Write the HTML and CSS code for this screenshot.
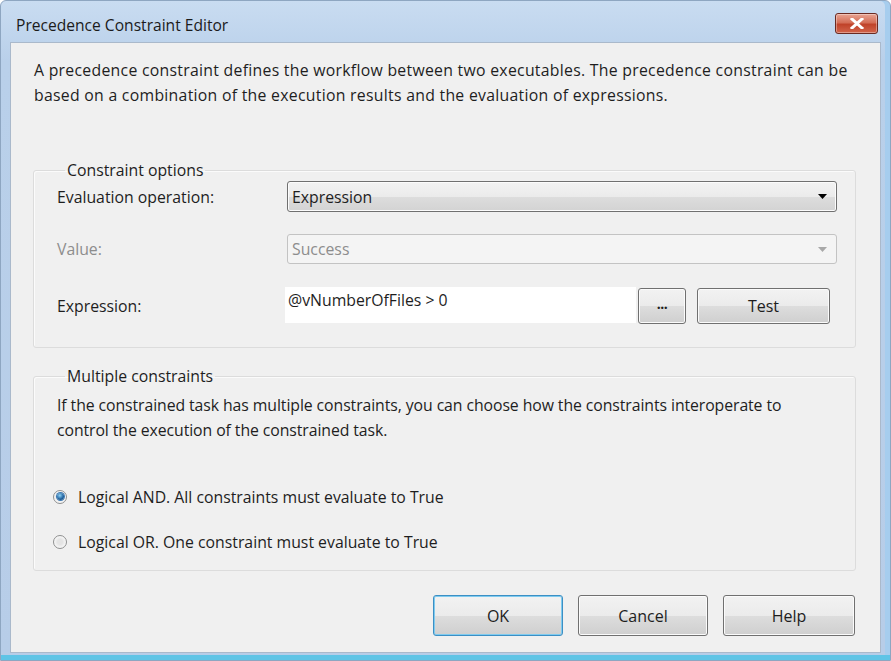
FILE: index.html
```html
<!DOCTYPE html>
<html>
<head>
<meta charset="utf-8">
<link rel="stylesheet" href="styles.css">
</head>
<body>
<div class="window">
  <div class="titlebar">
    <span class="title">Precedence Constraint Editor</span>
    <button class="close" aria-label="Close">
      <svg width="14" height="11" viewBox="0 0 14 11"><path d="M2 1 L12 10 M12 1 L2 10" stroke="#fff" stroke-width="3" stroke-linecap="square" fill="none"/></svg>
    </button>
  </div>
  <div class="client">
    <p class="desc">A precedence constraint defines the workflow between two executables. The precedence constraint can be<br>based on a combination of the execution results and the evaluation of expressions.</p>

    <fieldset class="group group-options">
      <legend>Constraint options</legend>
      <div class="form">
        <label class="lbl">Evaluation operation:</label>
        <div class="combo">
          <span>Expression</span>
          <svg class="arrow" width="9" height="5" viewBox="0 0 9 5"><path d="M0 0 H9 L4.5 5 Z" fill="#000"/></svg>
        </div>
        <label class="lbl disabled row2">Value:</label>
        <div class="combo combo-disabled row2">
          <span>Success</span>
          <svg class="arrow" width="9" height="5" viewBox="0 0 9 5"><path d="M0 0 H9 L4.5 5 Z" fill="#a8a8a8"/></svg>
        </div>
        <label class="lbl row3">Expression:</label>
        <div class="expr-row row3">
          <div class="textbox">@vNumberOfFiles &gt; 0</div>
          <button class="btn btn-dots">...</button>
          <button class="btn btn-test">Test</button>
        </div>
      </div>
    </fieldset>

    <fieldset class="group group-multi">
      <legend>Multiple constraints</legend>
      <p class="multi-text">If the constrained task has multiple constraints, you can choose how the constraints interoperate to<br>control the execution of the constrained task.</p>
      <div class="radios">
        <label class="radio-row"><span class="radio checked"></span>Logical AND. All constraints must evaluate to True</label>
        <label class="radio-row"><span class="radio"></span>Logical OR. One constraint must evaluate to True</label>
      </div>
    </fieldset>

    <div class="buttons">
      <button class="btn btn-big btn-default">OK</button>
      <button class="btn btn-big">Cancel</button>
      <button class="btn btn-big btn-help">Help</button>
    </div>
  </div>
</div>
</body>
</html>
```

FILE: styles.css
```css
* { box-sizing: border-box; }
html, body { margin: 0; padding: 0; }
body {
  width: 891px;
  height: 661px;
  overflow: hidden;
  font-family: "Open Sans", "Noto Sans", sans-serif;
  color: #1e1e1e;
}
.window {
  width: 891px;
  height: 661px;
  background: linear-gradient(#c9dcf1, #b9d0ea 60px, #b7cde8);
  border: 1px solid #8ea6c1;
  border-radius: 6px 6px 0 0;
  display: flex;
  flex-direction: column;
  padding: 0 9px 0 9px;
  box-shadow: inset 0 -5px 0 #5fc4e6, inset -5px 0 0 #a6cdee;
}
.titlebar {
  height: 41px;
  display: flex;
  align-items: flex-start;
  justify-content: space-between;
  flex-shrink: 0;
}
.title {
  font-size: 15.6px;
  margin: 13px 0 0 6px;
  color: #1b1b1b;
}
.close {
  margin: 12px 3px 0 0;
  width: 43px;
  height: 21px;
  border: 1px solid #6a2a22;
  border-radius: 3px;
  background: linear-gradient(#e8a493, #d46e57 45%, #c0432a 55%, #d2654c);
  box-shadow: inset 0 0 0 1px rgba(255,255,255,0.35);
  display: flex;
  align-items: center;
  justify-content: center;
  padding: 0;
}
.client {
  height: 611px;
  background: #f0f0f0;
  border: 1px solid #aab9cb;
  padding: 0 24px 0 22px;
  display: flex;
  flex-direction: column;
}
.desc {
  margin: 15px 0 0 1px;
  font-size: 15.8px;
  letter-spacing: 0.28px;
  line-height: 25px;
  white-space: nowrap;
}
.group {
  border: 1px solid #dcdcdc;
  border-radius: 3px;
  box-shadow: inset 1px 1px 0 #fbfbfb;
  margin: 0;
  padding: 0 18px 0 23px;
  min-width: 0;
}
.group legend {
  font-size: 15.8px;
  line-height: 20px;
  padding: 0 2px;
  margin-left: 8px;
}
.group-options {
  margin-top: 52px;
  height: 188px;
}
.form {
  display: grid;
  grid-template-columns: 230px 1fr;
  align-items: center;
  margin-top: 1px;
}
.row2 { margin-top: 22px; }
.row3 { margin-top: 23px; }
.lbl { font-size: 15.8px; }
.lbl.disabled { color: #8d8d8d; }
.combo {
  height: 31px;
  border: 1px solid #707070;
  border-radius: 3px;
  background: linear-gradient(#f3f3f3, #ebebeb 50%, #dddddd 51%, #d3d3d3);
  box-shadow: inset 0 0 0 1px #fcfcfc;
  display: flex;
  align-items: center;
  justify-content: space-between;
  padding: 0 9px 0 4px;
  font-size: 15.8px;
}
.combo-disabled {
  height: 30px;
  background: #f4f4f4;
  border-color: #c3c3c3;
  color: #8d8d8d;
  box-shadow: none;
}
.expr-row {
  display: flex;
  align-items: flex-start;
  margin-left: -2px;
  height: 37px;
}
.textbox {
  width: 351px;
  height: 36px;
  background: #fff;
  font-size: 15.8px;
  padding: 3px 0 0 3px;
  line-height: 20px;
}
.btn {
  font-family: inherit;
  color: #1e1e1e;
  border: 1px solid #707070;
  border-radius: 3px;
  background: linear-gradient(#f2f2f2, #ebebeb 50%, #dddddd 51%, #cfcfcf);
  box-shadow: inset 0 0 0 1px #fbfbfb;
  padding: 0;
  font-size: 15.8px;
}
.btn-dots {
  width: 48px;
  height: 36px;
  margin-left: 2px;
  margin-top: 1px;
  font-size: 14px;
  font-weight: 700;
  letter-spacing: -0.5px;
  line-height: 1;
  padding-bottom: 4px;
}
.btn-test {
  width: 133px;
  height: 36px;
  margin-left: 11px;
  margin-top: 1px;
  font-size: 16px;
}
.group-multi {
  margin-top: 18px;
  height: 205px;
}
.multi-text {
  margin: 7px 0 0 0;
  font-size: 15.8px;
  letter-spacing: -0.08px;
  line-height: 25px;
  white-space: nowrap;
}
.radios {
  margin-top: 41px;
  margin-left: -4px;
  display: flex;
  flex-direction: column;
  gap: 20px;
}
.radio-row {
  display: flex;
  align-items: center;
  font-size: 15.8px;
  height: 25px;
}
.radio {
  width: 14px;
  height: 14px;
  border-radius: 50%;
  border: 1px solid #8e8f8f;
  background: radial-gradient(circle, #e4e4e4 30%, #f8f8f8 70%);
  margin-right: 11px;
  display: inline-flex;
  align-items: center;
  justify-content: center;
}
.radio.checked::after {
  content: "";
  width: 7px;
  height: 7px;
  border-radius: 50%;
  background: radial-gradient(circle at 40% 35%, #8fd3f7, #1c5f9c 60%, #174a7a);
  box-shadow: 0 0 0 1px #3b79b4;
}
.buttons {
  display: flex;
  justify-content: flex-end;
  gap: 15px;
  margin-top: 24px;
  margin-right: 1px;
}
.btn-big {
  width: 130px;
  height: 41px;
  font-size: 16px;
}
.btn-help { width: 132px; }
.btn-default {
  border-color: #3c8fc4;
  box-shadow: inset 0 0 0 1px #7fcbef;
}
```
